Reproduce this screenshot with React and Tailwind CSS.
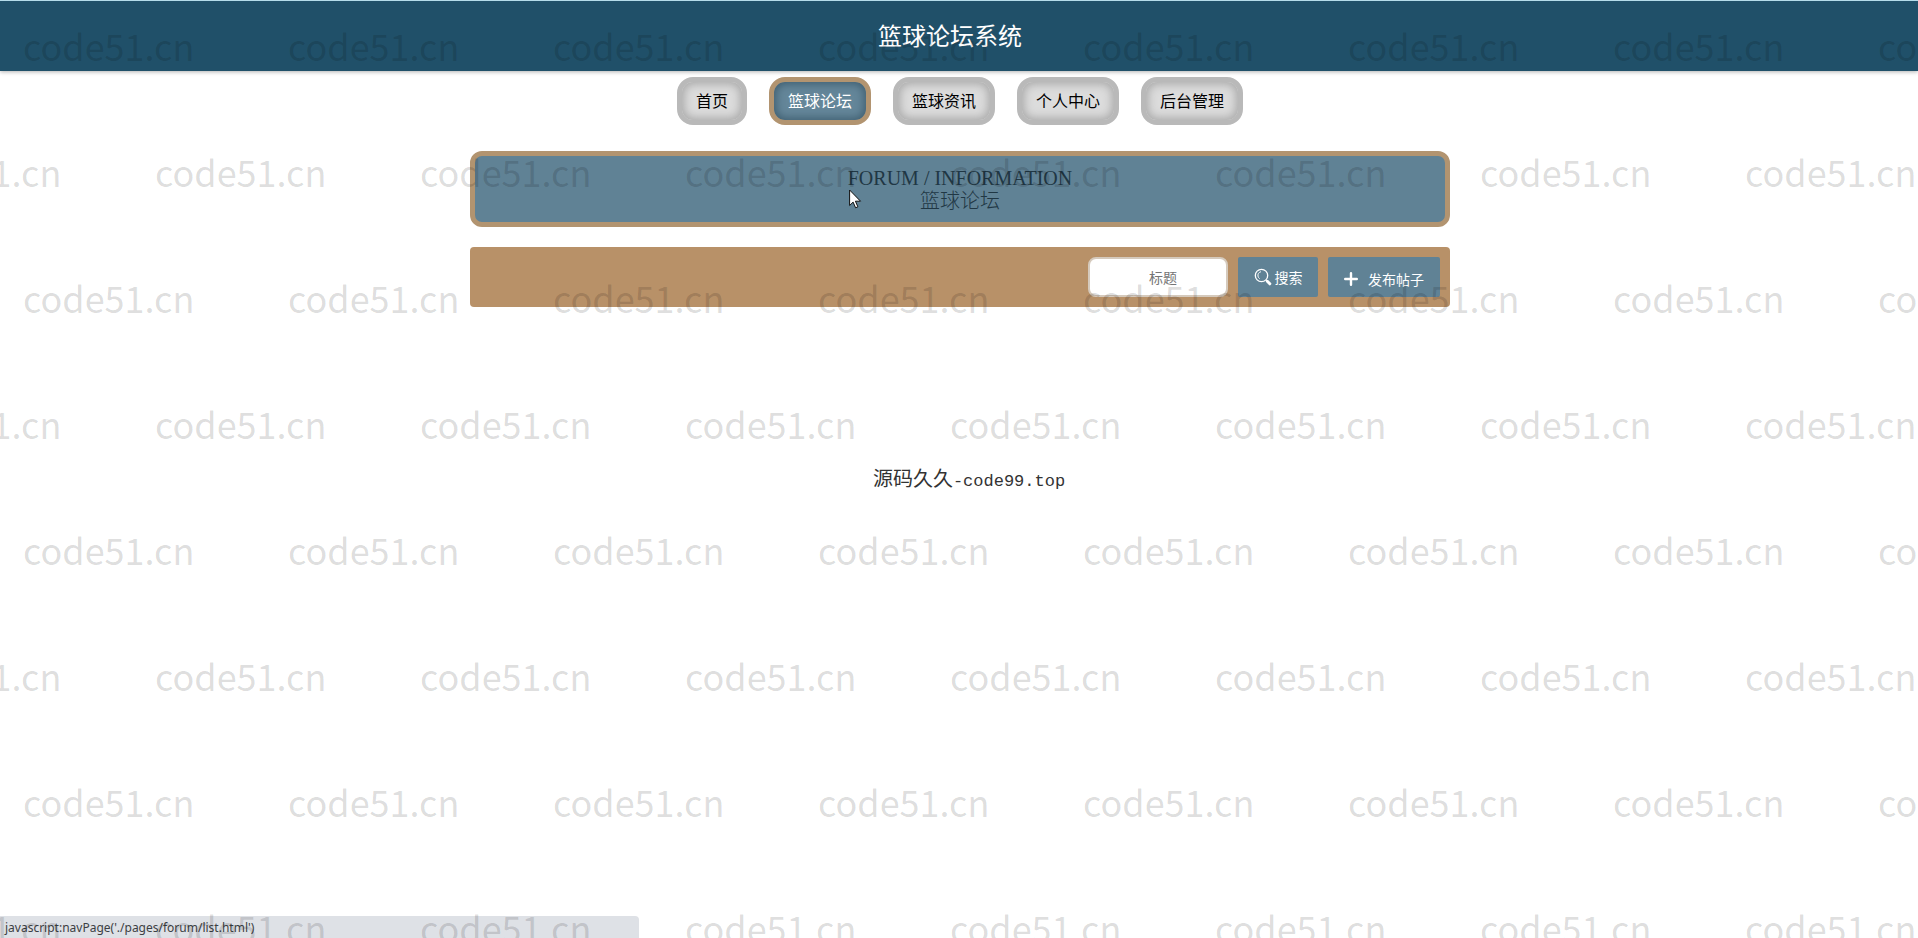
const NAV_ITEMS = [
  { label: "首页" },
  { label: "篮球论坛", active: true },
  { label: "篮球资讯" },
  { label: "个人中心" },
  { label: "后台管理" },
];

const NAV_BASE =
  "flex h-12 items-center rounded-[16px] border-[5px] px-[14px] pb-[2px] text-[16px]";
const NAV_IDLE =
  "border-[#b9b9b9] bg-[#dcdcdc] text-black shadow-[inset_0_0_10px_2px_#a8a8a8]";
const NAV_ACTIVE =
  "border-[#b29470] bg-[#648699] text-white shadow-[inset_0_0_8px_2px_#3f5e70]";

function SearchIcon() {
  return (
    <svg width="18" height="18" viewBox="0 0 18 18" fill="none" stroke="currentColor" aria-hidden="true">
      <circle cx="7.5" cy="7.5" r="6.2" strokeWidth="1.3" />
      <path d="M6.6 3.8C4.6 4.4 3.6 6.2 4 8.2c.2 1 .7 1.7 1.3 2.2" strokeWidth="1" strokeLinecap="round" />
      <path d="M12 12l1.2 1.2" strokeWidth="1.3" />
      <path d="M13.3 13.3l2.5 2.5" strokeWidth="3" strokeLinecap="round" />
    </svg>
  );
}

function PlusIcon() {
  return (
    <svg width="14" height="14" viewBox="0 0 14 14" stroke="currentColor" strokeWidth="2.4" strokeLinecap="round" aria-hidden="true">
      <path d="M7 1.2v11.6M1.2 7h11.6" />
    </svg>
  );
}

function Pointer() {
  return (
    <svg className="absolute left-1/2 top-[33px] -ml-[111px]" width="13" height="20" viewBox="0 0 13 20" aria-hidden="true">
      <path
        d="M.6 1v15.500l3.500-3.400 2.500 5.700 2.300-1-2.500-5.600h5.100z"
        fill="#fff"
        stroke="#111"
        strokeWidth="1"
        strokeLinejoin="round"
      />
    </svg>
  );
}

function Watermark() {
  return (
    <div
      aria-hidden="true"
      className="pointer-events-none absolute inset-0 z-20 overflow-hidden pt-[19px] font-['Noto_Sans_CJK_SC',sans-serif] text-[36px] leading-[52px] text-black/14 select-none"
    >
      {Array.from({ length: 8 }, (_, row) => (
        <div key={row} className={row % 2 ? "-ml-[110px] flex h-[126px]" : "ml-[23px] flex h-[126px]"}>
          {Array.from({ length: 8 }, (_, col) => (
            <span key={col} className="w-[265px] shrink-0">
              code51.cn
            </span>
          ))}
        </div>
      ))}
    </div>
  );
}

export default function App() {
  return (
    <div className="relative min-h-screen overflow-hidden bg-white font-['Noto_Sans_CJK_SC',sans-serif]">
      <header className="flex h-[71px] items-center justify-center border-t border-[#b5dcea] bg-[#205069] pr-[18px] pb-[2px] shadow-[0_1px_4px_rgba(0,0,0,0.3)]">
        <h1 className="text-[24px] leading-8 text-white">篮球论坛系统</h1>
      </header>

      <nav className="mt-[6px] flex justify-center gap-[22px] pl-[2px]">
        {NAV_ITEMS.map((item) => (
          <a
            key={item.label}
            href="#"
            aria-current={item.active ? "page" : undefined}
            className={`${NAV_BASE} ${item.active ? NAV_ACTIVE : NAV_IDLE}`}
          >
            {item.label}
          </a>
        ))}
      </nav>

      <main className="pl-[2px] pt-[26px]">
        <div className="mx-auto max-w-[980px]">
          <section className="relative flex h-[76px] flex-col items-center rounded-[12px] border-[5px] border-[#b29470] bg-[#608295] pt-[11px] font-['Liberation_Serif','Noto_Sans_CJK_SC',serif] text-[20px] leading-[23px]">
            <p className="text-[#203744]">FORUM / INFORMATION</p>
            <h2 className="font-light text-[#203744]">篮球论坛</h2>
            <Pointer />
          </section>

          <form
            className="mt-5 flex justify-end gap-[10px] rounded-[4px] bg-[#b89168] p-[10px] text-[14px]"
            onSubmit={(event) => event.preventDefault()}
          >
            <input
              type="text"
              aria-label="标题"
              placeholder="标题"
              className="h-10 w-[140px] rounded-[8px] border-2 border-[#d5cabd] bg-white pl-[10px] text-center outline-none placeholder:text-[#757575]"
            />
            <button type="submit" className="flex h-10 w-20 items-center justify-center gap-[3px] rounded-[2px] bg-[#608295] text-white">
              <SearchIcon />
              搜索
            </button>
            <button type="button" className="flex h-10 w-28 items-center justify-center gap-[10px] rounded-[2px] bg-[#608295] pt-1 text-white">
              <PlusIcon />
              发布帖子
            </button>
          </form>

          <p className="mt-[156px] flex items-baseline justify-center pl-[18px] text-[20px] leading-[30px] text-[#333]">
            源码久久
            <span className="font-['Liberation_Mono',monospace] text-[17px]">-code99.top</span>
          </p>
        </div>
      </main>

      <div className="absolute bottom-0 left-0 h-[22px] w-1/3 rounded-tr-[4px] bg-[#dee1e6] pl-[5px] font-['Noto_Sans',sans-serif] text-[12px] leading-6 text-[#3c4043]">
        javascript:navPage('./pages/forum/list.html')
      </div>

      <Watermark />
    </div>
  );
}
